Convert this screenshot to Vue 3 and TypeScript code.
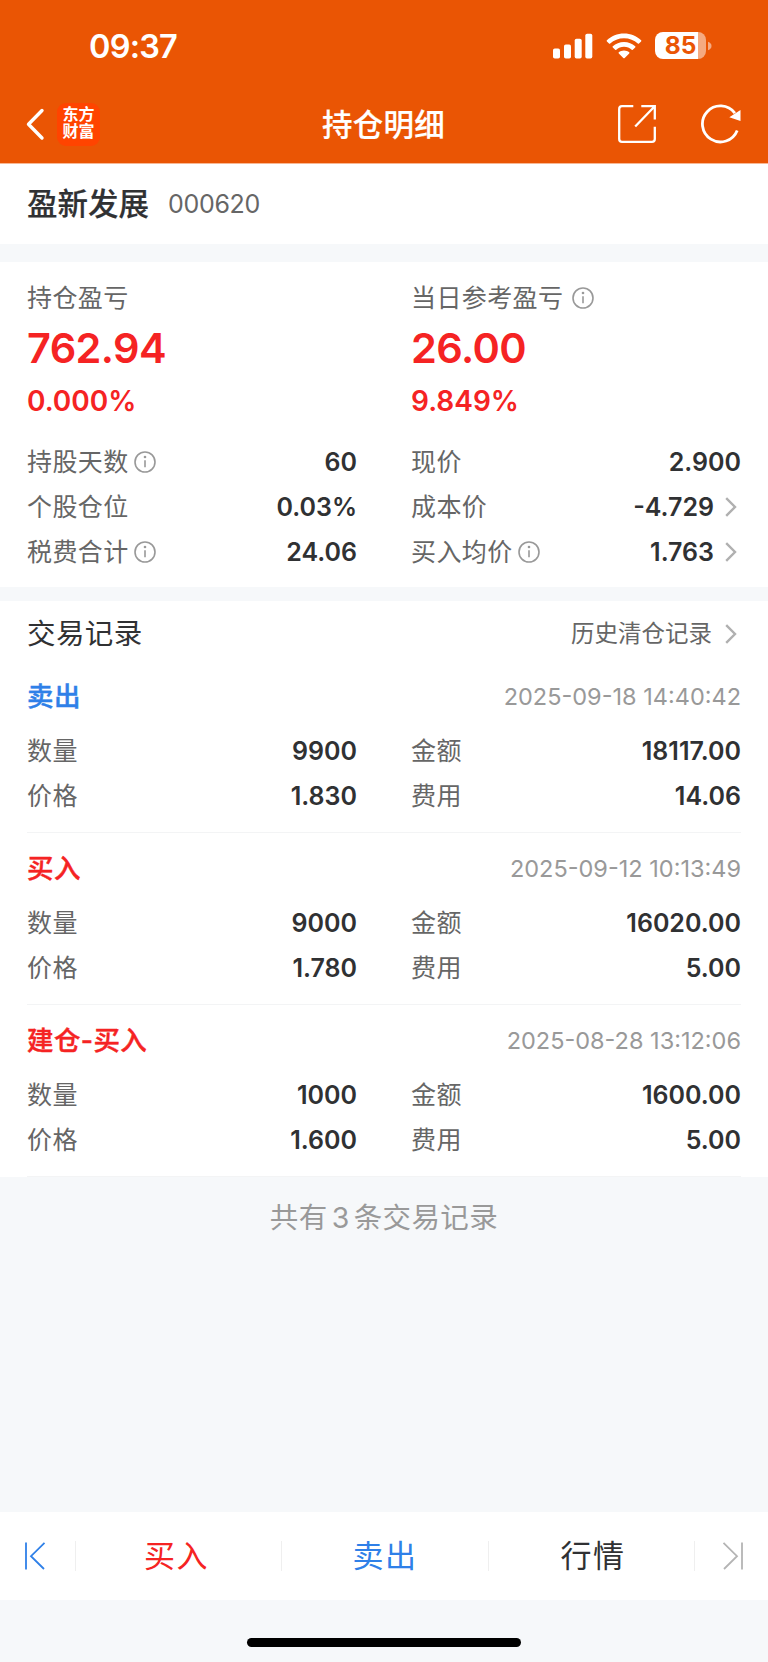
<script setup lang="ts">
interface Stat {
  label: string
  value: string
  info?: boolean
  link?: boolean
}
interface TradeRecord {
  type: string
  tone: 'buy' | 'sell'
  time: string
  cells: Stat[]
}

const stats: Stat[] = [
  { label: '持股天数', value: '60', info: true },
  { label: '现价', value: '2.900' },
  { label: '个股仓位', value: '0.03%' },
  { label: '成本价', value: '-4.729', link: true },
  { label: '税费合计', value: '24.06', info: true },
  { label: '买入均价', value: '1.763', info: true, link: true },
]

const trade = (
  type: string,
  tone: 'buy' | 'sell',
  time: string,
  qty: string,
  amount: string,
  price: string,
  fee: string,
): TradeRecord => ({
  type,
  tone,
  time,
  cells: [
    { label: '数量', value: qty },
    { label: '金额', value: amount },
    { label: '价格', value: price },
    { label: '费用', value: fee },
  ],
})

const records: TradeRecord[] = [
  trade('卖出', 'sell', '2025-09-18 14:40:42', '9900', '18117.00', '1.830', '14.06'),
  trade('买入', 'buy', '2025-09-12 10:13:49', '9000', '16020.00', '1.780', '5.00'),
  trade('建仓-买入', 'buy', '2025-08-28 13:12:06', '1000', '1600.00', '1.600', '5.00'),
]
</script>

<template>
  <div class="screen">
    <header class="header">
      <div class="status">
        <span class="clock">09:37</span>
        <div class="status-icons">
          <svg class="signal" width="40" height="26" viewBox="0 0 40 26" fill="#fff">
            <rect x="0" y="15.5" width="7" height="10" rx="1.8" />
            <rect x="11" y="11.5" width="7" height="14" rx="1.8" />
            <rect x="21.7" y="5.8" width="7" height="19.7" rx="1.8" />
            <rect x="32.3" y="0.8" width="7" height="24.7" rx="1.8" />
          </svg>
          <svg class="wifi" width="36" height="26" viewBox="0 0 36 26" fill="#fff">
            <path d="M18 .5C24.700 .5 30.700 3 35.100 7.200Q35.700 7.800 35.100 8.400L33 10.500Q32.400 11 31.800 10.500C28.200 7.200 23.400 5.200 18 5.200S7.800 7.200 4.200 10.500Q3.600 11 3 10.500L.9 8.400Q.3 7.800 .9 7.200C5.300 3 11.300 .5 18 .5Z" />
            <path d="M18 9C22.400 9 26.300 10.600 29.200 13.300Q29.800 13.900 29.200 14.500L26.800 16.800Q26.300 17.300 25.700 16.800C23.700 14.900 21 13.800 18 13.800S12.300 14.900 10.300 16.800Q9.700 17.300 9.200 16.800L6.800 14.500Q6.200 13.900 6.800 13.300C9.700 10.600 13.600 9 18 9Z" />
            <path d="M18 17.400C20 17.400 21.900 18.100 23.200 19.300Q23.800 19.900 23.200 20.500L18.700 25Q18 25.700 17.300 25L12.800 20.500Q12.200 19.900 12.800 19.300C14.100 18.100 16 17.400 18 17.400Z" />
          </svg>
          <div class="battery">
            <div class="battery-body"><span>85</span></div>
            <svg width="5" height="10" viewBox="0 0 5 10"><path d="M1 .8Q4.500 2 4.500 5T1 9.200Z" fill="#fff" opacity=".5" /></svg>
          </div>
        </div>
      </div>
      <nav class="nav">
        <div class="nav-left">
          <svg width="20" height="34" viewBox="0 0 20 34" fill="none" stroke="#fff" stroke-width="3.4" stroke-linecap="round" stroke-linejoin="round">
            <path d="M17 3.500 3.500 17.300 17 31" />
          </svg>
          <div class="logo"><span>东方</span><span>财富</span></div>
        </div>
        <h1>持仓明细</h1>
        <div class="nav-right">
          <svg width="40" height="40" viewBox="0 0 40 40" fill="none" stroke="#fff" stroke-width="2.300">
            <path d="M16.300 2.200H5Q2.200 2.200 2.200 5V35Q2.200 37.800 5 37.800H35Q37.800 37.800 37.800 35V22.800" />
            <path d="M24.300 2.200H37.800V15.500M37.500 2.500 18.200 22.500" />
          </svg>
          <svg width="42" height="40" viewBox="0 0 42 40" fill="none" stroke="#fff" stroke-width="2.800">
            <path d="M37.200 26.500A18 18 0 1 1 34.900 9.200" />
            <path d="M40.500 6V16.900L29.300 13.300Z" fill="#fff" stroke="none" />
          </svg>
        </div>
      </nav>
    </header>

    <section class="stock">
      <h2>盈新发展</h2>
      <span>000620</span>
    </section>

    <section class="summary">
      <div class="pair">
        <div class="profit">
          <div class="label">持仓盈亏</div>
          <div class="big">762.94</div>
          <div class="pct">0.000%</div>
        </div>
        <div class="profit">
          <div class="label wide">
            当日参考盈亏
            <svg class="info" viewBox="0 0 22 22"><circle cx="11" cy="11" r="10" /><path d="M11 9.200V16.300" /><circle class="dot" cx="11" cy="6" r="1.300" /></svg>
          </div>
          <div class="big">26.00</div>
          <div class="pct">9.849%</div>
        </div>
      </div>
      <div class="pair stats">
        <div v-for="s in stats" :key="s.label" class="cell">
          <div class="label">
            {{ s.label }}
            <svg v-if="s.info" class="info" viewBox="0 0 22 22"><circle cx="11" cy="11" r="10" /><path d="M11 9.200V16.300" /><circle class="dot" cx="11" cy="6" r="1.300" /></svg>
          </div>
          <div class="value">
            {{ s.value }}
            <svg v-if="s.link" class="chevron" viewBox="0 0 12 20"><path d="M1.200 1.200 10 10 1.200 18.800" /></svg>
          </div>
        </div>
      </div>
    </section>

    <section class="records">
      <div class="records-head">
        <h3>交易记录</h3>
        <div class="history">
          历史清仓记录
          <svg class="chevron" viewBox="0 0 12 20"><path d="M1.200 1.200 10 10 1.200 18.800" /></svg>
        </div>
      </div>
      <article v-for="r in records" :key="r.time" class="record">
        <div class="record-head">
          <span class="type" :class="r.tone">{{ r.type }}</span>
          <time>{{ r.time }}</time>
        </div>
        <div class="pair">
          <div v-for="c in r.cells" :key="c.label" class="cell">
            <div class="label">{{ c.label }}</div>
            <div class="value">{{ c.value }}</div>
          </div>
        </div>
      </article>
    </section>

    <p class="total">共有<span>3</span>条交易记录</p>

    <footer class="bar">
      <div class="edge first">
        <svg width="22" height="28" viewBox="0 0 22 28" fill="none" stroke="#2f80e8" stroke-width="1.800"><path d="M2 .5V27.500M20.500 .8 7 14.200 20 27" /></svg>
      </div>
      <div class="tab buy">买入</div>
      <div class="tab sell">卖出</div>
      <div class="tab quote">行情</div>
      <div class="edge last">
        <svg width="22" height="28" viewBox="0 0 22 28" fill="none" stroke="#b4b4b4" stroke-width="1.800"><path d="M20 .5V27.500M1.500 .8 15 14.200 2 27" /></svg>
      </div>
    </footer>
    <div class="home"><i></i></div>
  </div>
</template>

<style>
body {
  margin: 0;
  background: #f6f8fa;
}
</style>

<style scoped>
.screen {
  width: 768px;
  height: 1662px;
  display: flex;
  flex-direction: column;
  background: #f6f8fa;
  color: #303133;
  font-family: Inter, "Noto Sans CJK SC", sans-serif;
  overflow: hidden;
}
h1, h2, h3, p {
  margin: 0;
  font-weight: 500;
}
svg {
  display: block;
  flex: none;
}
.header {
  height: 163px;
  flex: none;
  background: #ea5504;
  border-bottom: 1px solid #f8b894;
  color: #fff;
}
.status {
  height: 92px;
  box-sizing: border-box;
  padding: 0 56px 1px 89px;
  display: flex;
  justify-content: space-between;
  align-items: center;
}
.clock {
  font-size: 32.500px;
  font-weight: 600;
  letter-spacing: -0.8px;
  padding-top: 2px;
}
.status-icons {
  display: flex;
  align-items: center;
}
.wifi {
  margin: 0 13px 0 13px;
}
.battery {
  display: flex;
  align-items: center;
  gap: 1px;
}
.battery-body {
  width: 51px;
  height: 27px;
  border-radius: 8px;
  background: linear-gradient(90deg, #fff 43.500px, #f5aa81 43.500px);
  color: #ea5504;
  font-size: 24.500px;
  line-height: 27px;
  font-weight: 700;
  text-align: center;
}
.nav {
  height: 64px;
  display: grid;
  grid-template-columns: 1fr auto 1fr;
  align-items: center;
  padding: 0 26px 0 25px;
}
.nav-left {
  display: flex;
  align-items: center;
  gap: 12px;
}
.logo {
  width: 43px;
  height: 43px;
  box-sizing: border-box;
  padding-top: 3px;
  border-radius: 9px;
  background: #ff4400;
  display: flex;
  flex-direction: column;
  align-items: center;
  font-size: 16px;
  line-height: 17.500px;
  font-weight: 700;
}
h1 {
  font-size: 30.500px;
  line-height: 40px;
  letter-spacing: 0.2px;
  padding-top: 1px;
  -webkit-text-stroke: 0.2px;
}
.nav-right {
  display: flex;
  justify-content: flex-end;
  gap: 43px;
}
.stock {
  height: 80px;
  flex: none;
  background: #fff;
  padding-left: 27px;
  display: flex;
  align-items: center;
  margin-bottom: 18px;
}
h2 {
  font-size: 30.500px;
  line-height: 40px;
  -webkit-text-stroke: 0.2px;
  margin-top: -1px;
}
.stock span {
  margin: -1px 0 0 19px;
  font-size: 25px;
  letter-spacing: -0.3px;
  color: #666;
}
.summary {
  height: 325px;
  flex: none;
  box-sizing: border-box;
  padding: 18px 27px 0;
  background: #fff;
  margin-bottom: 14px;
}
.pair {
  display: grid;
  grid-template-columns: 330px 330px;
  column-gap: 54px;
}
.label {
  display: flex;
  align-items: center;
  gap: 5px;
  font-size: 25px;
  line-height: 36px;
  letter-spacing: 0.4px;
  color: #666;
}
.label.wide {
  gap: 9px;
}
.info {
  width: 22px;
  height: 22px;
  fill: none;
  stroke: #999;
  stroke-width: 1.600;
}
.info .dot {
  fill: #999;
  stroke: none;
}
.big {
  font-size: 41.500px;
  line-height: 64px;
  font-weight: 600;
  letter-spacing: -0.6px;
  color: #f52323;
}
.pct {
  font-size: 28px;
  line-height: 42px;
  font-weight: 600;
  color: #f52323;
}
.stats {
  margin-top: 17px;
}
.cell {
  height: 45px;
  display: flex;
  justify-content: space-between;
  align-items: center;
}
.value {
  display: flex;
  align-items: center;
  gap: 11px;
  font-size: 25px;
  font-weight: 600;
}
.chevron {
  width: 12px;
  height: 20px;
  margin-right: 4px;
  fill: none;
  stroke: #b0b0b0;
  stroke-width: 2.400;
}
.records {
  flex: none;
  padding: 0 27px;
  background: #fff;
}
.records-head {
  height: 60px;
  box-sizing: border-box;
  padding-top: 6px;
  display: flex;
  justify-content: space-between;
  align-items: center;
}
h3 {
  font-size: 28.500px;
  line-height: 40px;
  letter-spacing: 0.4px;
  font-weight: 400;
}
.history {
  display: flex;
  align-items: center;
  gap: 13px;
  font-size: 23.500px;
  line-height: 36px;
  color: #666;
}
.record {
  height: 172px;
  box-sizing: border-box;
  padding-top: 5px;
  border-bottom: 1px solid #f3f4f5;
}
.record-head {
  height: 60px;
  margin-bottom: 2px;
  display: flex;
  justify-content: space-between;
  align-items: center;
}
.type {
  font-size: 26.500px;
  line-height: 40px;
  letter-spacing: 0.4px;
  font-weight: 500;
  -webkit-text-stroke: 0.4px;
}
.buy {
  color: #f52323;
}
.sell {
  color: #2f80e8;
}
time {
  font-size: 23.500px;
  color: #999;
}
.total {
  margin-top: 21px;
  text-align: center;
  font-size: 28.500px;
  line-height: 40px;
  letter-spacing: 0.4px;
  font-weight: 400;
  color: #999;
}
.total span {
  margin: 0 4px;
}
.bar {
  margin-top: auto;
  height: 88px;
  flex: none;
  background: #fff;
  display: grid;
  grid-template-columns: 75px 206px 207px 206px 74px;
  align-items: center;
}
.edge, .tab {
  height: 30px;
  display: flex;
  align-items: center;
  justify-content: center;
}
.tab, .edge.last {
  border-left: 1px solid #efefef;
}
.edge.first {
  padding-right: 5px;
}
.edge.last {
  padding-left: 3px;
}
.tab {
  font-size: 31px;
  line-height: 30px;
  letter-spacing: 1.500px;
  align-items: flex-start;
}
.tab.buy {
  padding-right: 4px;
}
.tab.quote {
  padding-left: 3px;
}
.home {
  height: 62px;
  flex: none;
  display: flex;
  justify-content: center;
}
.home i {
  width: 274px;
  height: 9px;
  margin-top: 38px;
  border-radius: 5px;
  background: #000;
}
</style>
